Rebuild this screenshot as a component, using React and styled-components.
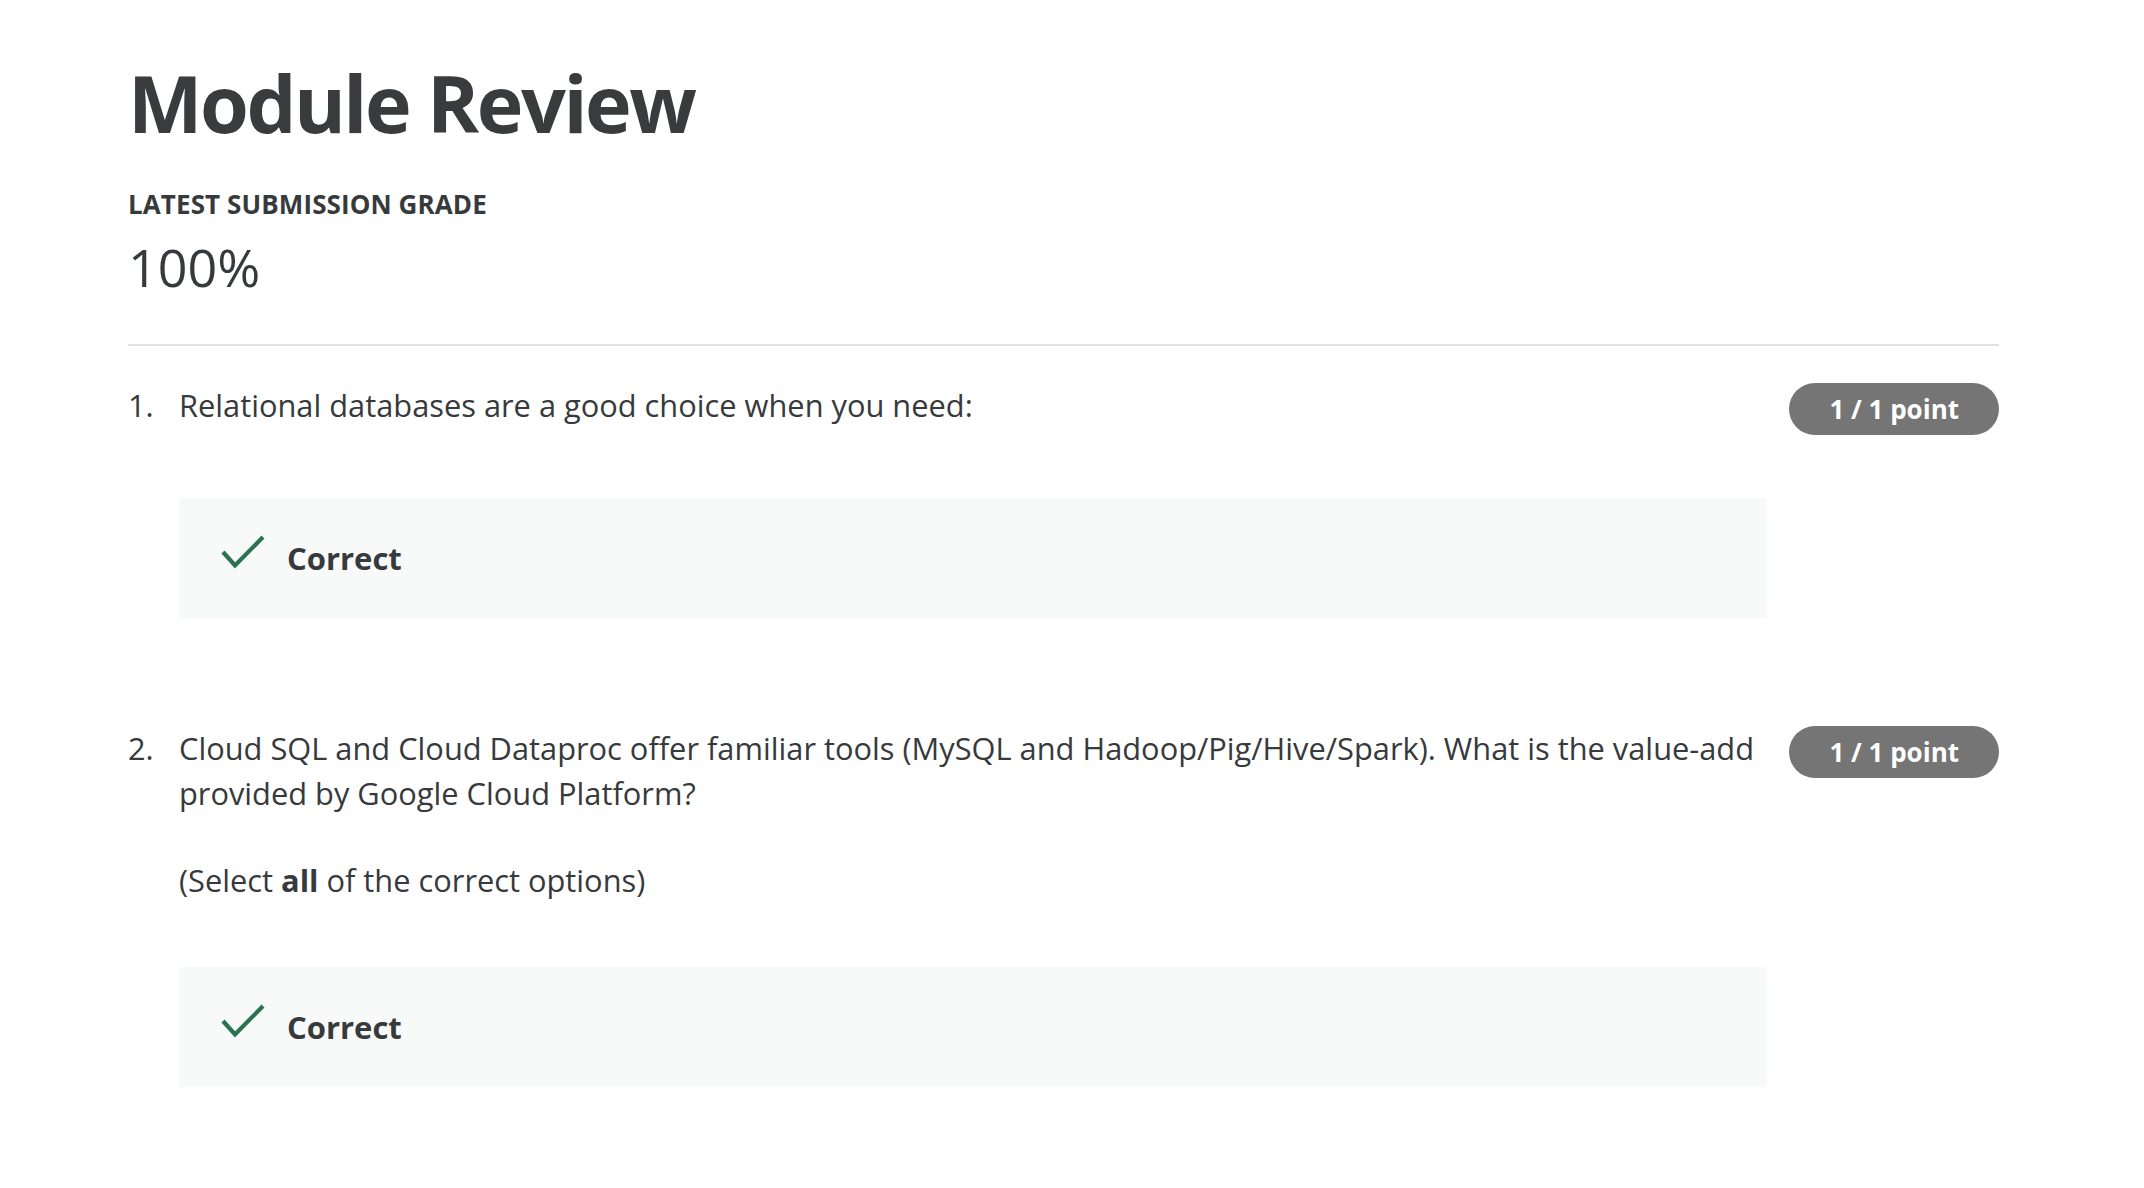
import React from 'react';
import styled, { createGlobalStyle } from 'styled-components';

const GlobalStyle = createGlobalStyle`
	html, body {
		margin: 0;
		padding: 0;
		background: #ffffff;
	}
	body {
		font-family: "Open Sans", "Noto Sans", sans-serif;
		color: #373a3c;
	}
`;

const Page = styled.main`
	padding: 53px 145px 60px 128px;
`;

const Title = styled.h1`
	margin: 0;
	font-size: 79px;
	line-height: 100px;
	font-weight: 700;
	letter-spacing: -2.5px;
	color: #3a3b3d;
`;

const GradeLabel = styled.div`
	margin-top: 35px;
	font-size: 26px;
	line-height: 32px;
	font-weight: 700;
	letter-spacing: 0.1px;
	text-transform: uppercase;
	color: #373a3c;
`;

const GradeValue = styled.div`
	margin-top: 15px;
	font-size: 52px;
	line-height: 64px;
	font-weight: 400;
	color: #373a3c;
`;

const Divider = styled.hr`
	margin: 45px 0 37px;
	border: 0;
	border-top: 2px solid #e1e1e1;
`;

const Question = styled.section`
	display: grid;
	grid-template-columns: 51px 1fr auto;
	margin-bottom: ${(p) => p.$gap || 0}px;
`;

const Number = styled.div`
	font-size: 30.8px;
	line-height: 45px;
`;

const Body = styled.div`
	padding-right: 22px;
`;

const Prompt = styled.p`
	margin: 0;
	font-size: 30.8px;
	line-height: 45px;
	& + & {
		margin-top: 42px;
	}
	b {
		font-weight: 700;
	}
`;

const Points = styled.div`
	align-self: start;
	height: 52px;
	padding: 0 40px;
	border-radius: 26px;
	background: #757575;
	color: #ffffff;
	font-size: 26px;
	font-weight: 700;
	line-height: 52px;
	white-space: nowrap;
`;

const Feedback = styled.div`
	display: flex;
	align-items: center;
	gap: 22px;
	height: 120px;
	margin-top: ${(p) => p.$top}px;
	padding: 0 42px;
	background: #f8f9f9;
	font-size: 31px;
	font-weight: 700;
	color: #373a3c;

	svg {
		margin-bottom: 12px;
		flex: none;
	}
`;

const Check = () => (
	<svg width="44" height="34" viewBox="0 0 44 34" fill="none">
		<polyline
			points="2,17 14,30.5 42,2"
			stroke="#2a7350"
			strokeWidth="4.2"
			strokeLinecap="butt"
			strokeLinejoin="miter"
		/>
	</svg>
);

const questions = [
	{
		n: 1,
		text: [<>Relational databases are a good choice when you need:</>],
		boxTop: 70,
		gap: 108
	},
	{
		n: 2,
		text: [
			<>
				Cloud SQL and Cloud Dataproc offer familiar tools (MySQL and
				Hadoop/Pig/Hive/Spark). What is the value-add provided by Google
				Cloud Platform?
			</>,
			<>
				(Select <b>all</b> of the correct options)
			</>
		],
		boxTop: 64,
		gap: 0
	}
];

export default function App() {
	return (
		<>
			<GlobalStyle />
			<Page>
				<Title>Module Review</Title>
				<GradeLabel>Latest Submission Grade</GradeLabel>
				<GradeValue>100%</GradeValue>
				<Divider />
				{questions.map((q) => (
					<Question key={q.n} $gap={q.gap}>
						<Number>{q.n}.</Number>
						<Body>
							{q.text.map((t, i) => (
								<Prompt key={i}>{t}</Prompt>
							))}
							<Feedback $top={q.boxTop}>
								<Check />
								Correct
							</Feedback>
						</Body>
						<Points>1 / 1 point</Points>
					</Question>
				))}
			</Page>
		</>
	);
}
